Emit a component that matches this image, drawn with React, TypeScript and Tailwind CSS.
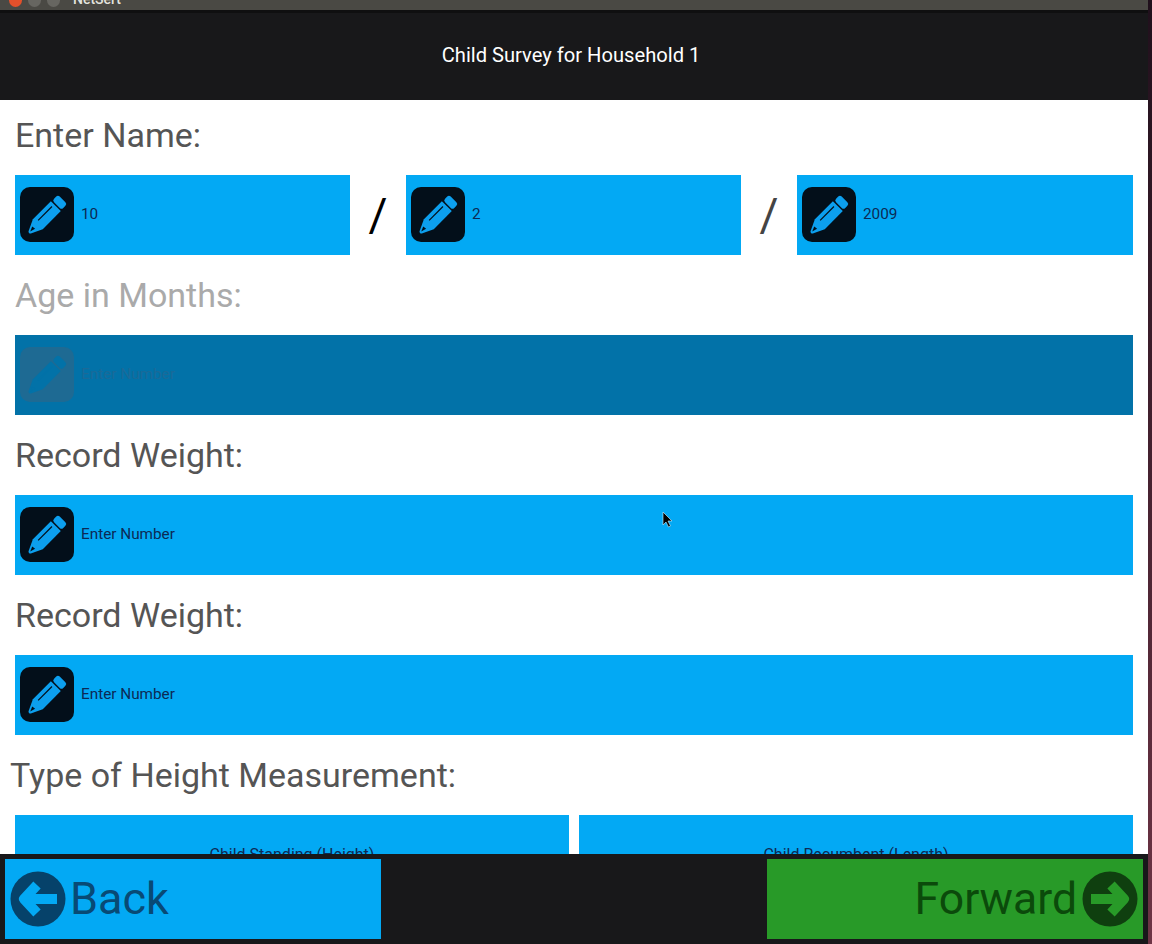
import React from "react";

const font = { fontFamily: "Roboto, sans-serif" };

const PencilIcon = ({ className, line }: { className: string; line: string }) => (
  <svg viewBox="0 0 54 55" className={className} fill="currentColor">
    <g transform="translate(27 28) rotate(45)">
      <rect x="-6.500" y="-22" width="13" height="8" rx="2.500" />
      <path d="M-7 -12.500H7V13L1.600 24.500c-.6 1.200-2.600 1.200-3.200 0L-7 13z" />
      <path d="M-2.500 -9.500V10" stroke={line} strokeWidth="1.200" fill="none" />
      <path d="M-2.400 18.500L1.400 18.200L-.2 23.500z" fill={line} />
    </g>
  </svg>
);

const NumberField = ({ value, className }: { value: string; className: string }) => (
  <div className={`flex h-20 items-center gap-[7px] bg-[#03a9f4] pb-[2px] pl-[5px] text-[15.300px] text-[#0c2a55] ${className}`}>
    <span className="flex h-[55px] w-[54px] shrink-0 items-center justify-center rounded-[10px] bg-[#030f1a] text-[#0c9fee]">
      <PencilIcon className="h-[55px] w-[54px]" line="#030f1a" />
    </span>
    <span className="pt-[1px]">{value}</span>
  </div>
);

const Label = ({ text, className = "" }: { text: string; className?: string }) => (
  <div className={`flex h-20 items-center text-[34px] leading-none ${className}`}>{text}</div>
);

const ArrowCircle = ({ direction, className }: { direction: "left" | "right"; className: string }) => (
  <svg viewBox="0 0 56 56" className={`h-14 w-14 shrink-0 ${className}`}>
    <circle cx="28" cy="28" r="27.500" fill="currentColor" />
    <g
      transform={direction === "right" ? "rotate(180 28 28)" : undefined}
      fill="none"
      stroke="var(--arrow)"
      strokeWidth="10"
      strokeLinejoin="round"
    >
      <path d="M27 14L14 28L27 42" />
      <path d="M16 28H47" />
    </g>
  </svg>
);

export default function App() {
  return (
    <div className="relative flex h-[944px] w-[1152px] overflow-hidden bg-white" style={font}>
      <div className="flex w-[1148px] flex-col">
        <div className="relative h-[10px] shrink-0 overflow-hidden bg-[#4a4944]">
          <span className="absolute -top-[6px] left-[9px] h-[13px] w-[13px] rounded-full bg-[#e2502b]" />
          <span className="absolute -top-[6px] left-[28px] h-[13px] w-[13px] rounded-full bg-[#676661]" />
          <span className="absolute -top-[6px] left-[47px] h-[13px] w-[13px] rounded-full bg-[#676661]" />
          <span className="absolute -top-[9px] left-[73px] text-[14px] font-medium leading-[16px] text-[#e4e4df]">NetSert</span>
        </div>

        <header className="flex h-[90px] shrink-0 items-center justify-center border-t-[3px] border-[#0f0f10] bg-[#18181a] pr-[6px] pb-[3px] text-[20.150px] text-white">
          Child Survey for Household 1
        </header>

        <main className="min-h-0 flex-1 overflow-hidden pr-[15px] pl-[15px] text-[#555555]">
          <Label text="Enter Name:" className="h-[75px] pb-[5px]" />
          <div className="flex items-center">
            <NumberField value="10" className="w-[335px]" />
            <span className="w-[56px] text-center text-[46px] leading-none text-black">/</span>
            <NumberField value="2" className="w-[335px]" />
            <span className="w-[56px] text-center text-[46px] leading-none text-[#444444]">/</span>
            <NumberField value="2009" className="w-[336px]" />
          </div>

          <Label text="Age in Months:" className="text-[#aaaaaa]" />
          <div className="flex h-20 items-center gap-[7px] bg-[#0272a8] pb-[2px] pl-[5px] text-[15.300px] text-[#1a6a98]">
            <span className="flex h-[55px] w-[54px] shrink-0 items-center justify-center rounded-[10px] bg-[#1e6a93] text-[#0272a8]">
              <PencilIcon className="h-[55px] w-[54px]" line="#0272a8" />
            </span>
            <span className="pt-[1px]">Enter Number</span>
          </div>

          <Label text="Record Weight:" />
          <NumberField value="Enter Number" className="w-full" />

          <Label text="Record Weight:" />
          <NumberField value="Enter Number" className="w-full" />

          <Label text="Type of Height Measurement:" className="-ml-[5px]" />
          <div className="flex gap-[10px]">
            <div className="flex h-20 flex-1 items-center justify-center bg-[#03a9f4] text-[16px] text-[#0c2a55]">Child Standing (Height)</div>
            <div className="flex h-20 flex-1 items-center justify-center bg-[#03a9f4] text-[16px] text-[#0c2a55]">Child Recumbent (Length)</div>
          </div>
        </main>

        <footer className="flex h-[90px] shrink-0 justify-between bg-[#18181a] px-[5px] py-[5px]">
          <button className="flex w-[376px] items-center gap-[4px] bg-[#03a9f4] pl-[5px] text-[45px] text-[#084a75] [--arrow:#03a9f4]">
            <ArrowCircle direction="left" className="text-[#06426a]" />
            <span>Back</span>
          </button>
          <button className="flex w-[376px] items-center justify-end gap-[5px] bg-[#289a28] pr-[5px] text-[44.500px] text-[#0b4a0b] [--arrow:#289a28]">
            <span>Forward</span>
            <ArrowCircle direction="right" className="text-[#0f3f0f]" />
          </button>
        </footer>
      </div>

      {/* desktop showing behind the window */}
      <div className="flex-1 bg-gradient-to-b from-[#20101c] to-[#6e3445]" />

      {/* mouse pointer from the recording */}
      <svg viewBox="0 0 12 18" className="absolute top-[511px] left-[662px] h-[18px] w-[12px]">
        <path d="M1 1v13l3-3 2.500 5 2-1-2.500-5h4z" fill="#000" stroke="#cfeefc" strokeWidth="0.600" />
      </svg>
    </div>
  );
}
